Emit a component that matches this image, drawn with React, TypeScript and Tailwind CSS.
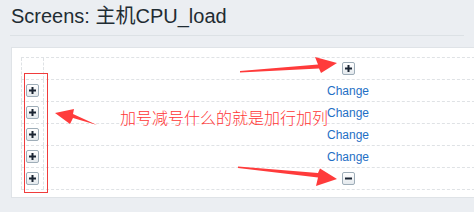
import React from "react";

function PlusBtn({ minus = false }: { minus?: boolean }) {
  return (
    <div className="w-[13px] h-[13px] rounded-[2px] border border-[#9eadb8] bg-gradient-to-b from-white to-[#e4e9ed] flex items-center justify-center">
      <svg width="9" height="9" viewBox="0 0 9 9">
        <rect x="1" y="3.5" width="7" height="2" fill="#1a2433" />
        {!minus && <rect x="3.5" y="1" width="2" height="7" fill="#1a2433" />}
      </svg>
    </div>
  );
}

type Row = { left: boolean; right: "plus" | "minus" | "change" | null };

const rows: Row[] = [
  { left: false, right: "plus" },
  { left: true, right: "change" },
  { left: true, right: "change" },
  { left: true, right: "change" },
  { left: true, right: "change" },
  { left: true, right: "minus" },
];

export default function App() {
  return (
    <div className="relative w-[474px] h-[212px] overflow-hidden bg-[#ebeef2] font-['Liberation_Sans','Noto_Sans_CJK_SC',sans-serif]">
      <div className="h-[36px] mx-[10px] border-b border-[#dce1e5] pt-[4px]">
        <h1 className="text-[20px] leading-[24px] text-[#1f2c33] pl-[1px]">
          Screens: 主机CPU_load
        </h1>
      </div>
      <div className="mt-[11px] ml-[11px] w-[480px] h-[151px] bg-white border border-[#dfe3e7] pl-[9px] pt-[9px]">
        <div className="border-t border-dashed border-[#dfe2e5]">
          {rows.map((r, i) => (
            <div key={i} className="flex h-[22px] border-b border-dashed border-[#dfe2e5]">
              <div className="w-[23px] shrink-0 border-x border-dashed border-[#dfe2e5] flex items-center justify-center">
                {r.left && <PlusBtn />}
              </div>
              <div className="w-[280px] shrink-0" />
              <div className="w-[48px] shrink-0 flex items-center justify-center">
                {r.right === "plus" && <PlusBtn />}
                {r.right === "minus" && <PlusBtn minus />}
                {r.right === "change" && (
                  <span className="text-[12px] leading-[14px] text-[#1f6fc5]">Change</span>
                )}
              </div>
            </div>
          ))}
        </div>
      </div>

      {/* annotations */}
      <div className="absolute left-[24px] top-[73px] w-[24px] h-[120px] border border-[#f03c3c]" />
      <div className="absolute left-[120px] top-[107px] text-[16px] leading-[20px] text-[#ff3636] font-['Noto_Sans_CJK_SC',sans-serif] font-light">
        加号减号什么的就是加行加列
      </div>
      <svg className="absolute left-0 top-0" width="474" height="212" viewBox="0 0 474 212">
        <polygon points="240,71 318,64.5 315,57 337,63 321,73 319,68.5 240,72.5" fill="#ff3b3b" />
        <polygon points="238,166.5 318,173 320,168.5 337,179 316,186 318,177.5 238,168" fill="#ff3b3b" />
        <polygon points="55,113 74,109 73,114 97,125 73,118 70,124" fill="#ff3b3b" />
      </svg>
    </div>
  );
}
